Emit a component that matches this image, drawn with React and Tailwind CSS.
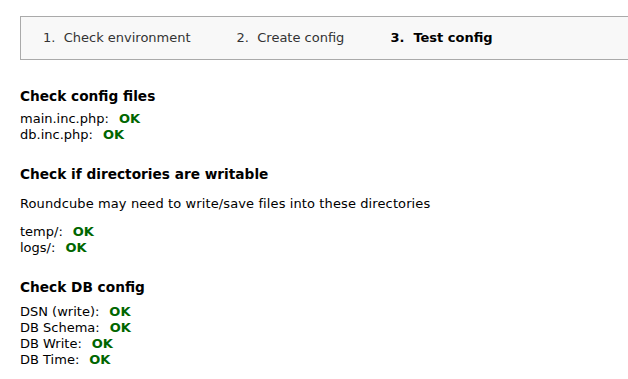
export default function App() {
  const Row = ({ label }) => (
    <div className="leading-[16px] h-4">
      {label}:<span className="ml-[10px] font-bold text-[#006600]">OK</span>
    </div>
  );
  return (
    <div className="w-[628px] h-[379px] overflow-hidden bg-white text-black text-[13px]" style={{ fontFamily: '"DejaVu Sans", Verdana, sans-serif' }}>
      <div className="pt-4 pl-5">
        <div className="w-[640px] h-[44px] border border-[#aaaaaa] bg-[#f8f8f8] flex items-center pl-[22px] text-[13px] text-[#333333]">
          <span className="mr-[46px]">1.&nbsp; Check environment</span>
          <span className="mr-[46px]">2.&nbsp; Create config</span>
          <span className="font-bold text-black">3.&nbsp; Test config</span>
        </div>
      </div>
      <div className="pl-5">
        <h3 className="mt-[27px] text-[13.7px] font-bold leading-[18px] h-[18px]">Check config files</h3>
        <div className="mt-[6px]">
          <Row label="main.inc.php" />
          <Row label="db.inc.php" />
        </div>
        <h3 className="mt-[22px] text-[13.7px] font-bold leading-[18px] h-[18px]">Check if directories are writable</h3>
        <p className="mt-[13px] leading-[16px] h-4 tracking-[0.11px]">Roundcube may need to write/save files into these directories</p>
        <div className="mt-[12px]">
          <Row label="temp/" />
          <Row label="logs/" />
        </div>
        <h3 className="mt-[22px] text-[13.7px] font-bold leading-[18px] h-[18px]">Check DB config</h3>
        <div className="mt-[8px]">
          <Row label="DSN (write)" />
          <Row label="DB Schema" />
          <Row label="DB Write" />
          <Row label="DB Time" />
        </div>
      </div>
    </div>
  );
}
